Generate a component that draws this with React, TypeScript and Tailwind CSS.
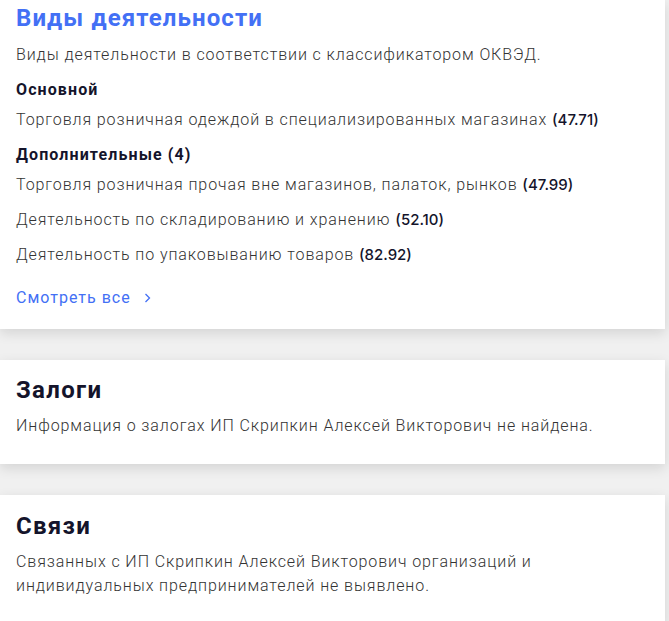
import React from "react";

const dark = "text-[#14142b]";
const body = "text-[16px] leading-6 font-light text-[#333] tracking-[0.9px]";

function Code({ name, code }: { name: string; code: string }) {
  return (
    <p className={body}>
      {name}{" "}
      <span className={`font-['Inter',sans-serif] font-medium tracking-normal text-[15px] ${dark}`}>({code})</span>
    </p>
  );
}

export default function App() {
  return (
    <div className="min-h-screen bg-[#f0f0f0] font-['Roboto',sans-serif] pr-[4px]">
      <section className="bg-white shadow-[0_4px_12px_rgba(0,0,0,0.12)] px-4 pt-[2px] pb-[19px]">
        <h2 className="text-[24px] leading-8 font-bold tracking-[1.1px] text-[#4370f5]">Виды деятельности</h2>
        <p className={`mt-[9px] ${body}`}>
          Виды деятельности в соответствии с классификатором ОКВЭД.
        </p>
        <h3 className={`mt-[11px] text-[16px] leading-6 font-bold tracking-[1.1px] ${dark}`}>Основной</h3>
        <div className="mt-[6px]">
          <Code name="Торговля розничная одеждой в специализированных магазинах" code="47.71" />
        </div>
        <h3 className={`mt-[11px] text-[16px] leading-6 font-bold tracking-[1.1px] ${dark}`}>Дополнительные (4)</h3>
        <div className="mt-[6px] flex flex-col gap-[11px]">
          <Code name="Торговля розничная прочая вне магазинов, палаток, рынков" code="47.99" />
          <Code name="Деятельность по складированию и хранению" code="52.10" />
          <Code name="Деятельность по упаковыванию товаров" code="82.92" />
        </div>
        <a href="#" className="mt-[19px] inline-flex items-center gap-[12px] text-[16px] leading-6 tracking-[1px] text-[#4370f5]">
          Смотреть все
          <svg width="9" height="12" viewBox="0 0 9 12" fill="none">
            <path d="M2.5 2l4 4-4 4" stroke="#4370f5" strokeWidth="1.3" />
          </svg>
        </a>
      </section>

      <section className="mt-[31px] bg-white shadow-[0_4px_12px_rgba(0,0,0,0.12)] px-4 pt-[14px] pb-[26px]">
        <h2 className={`text-[24px] leading-8 font-bold tracking-[1.3px] ${dark}`}>Залоги</h2>
        <p className={`mt-[8px] ${body}`}>
          Информация о залогах ИП Скрипкин Алексей Викторович не найдена.
        </p>
      </section>

      <section className="mt-[31px] bg-white shadow-[0_4px_12px_rgba(0,0,0,0.12)] px-4 pt-[15px] pb-[26px]">
        <h2 className={`text-[24px] leading-8 font-bold tracking-[1.3px] ${dark}`}>Связи</h2>
        <p className={`mt-[8px] ${body}`}>
          Связанных с ИП Скрипкин Алексей Викторович организаций и индивидуальных предпринимателей не выявлено.
        </p>
      </section>
    </div>
  );
}
